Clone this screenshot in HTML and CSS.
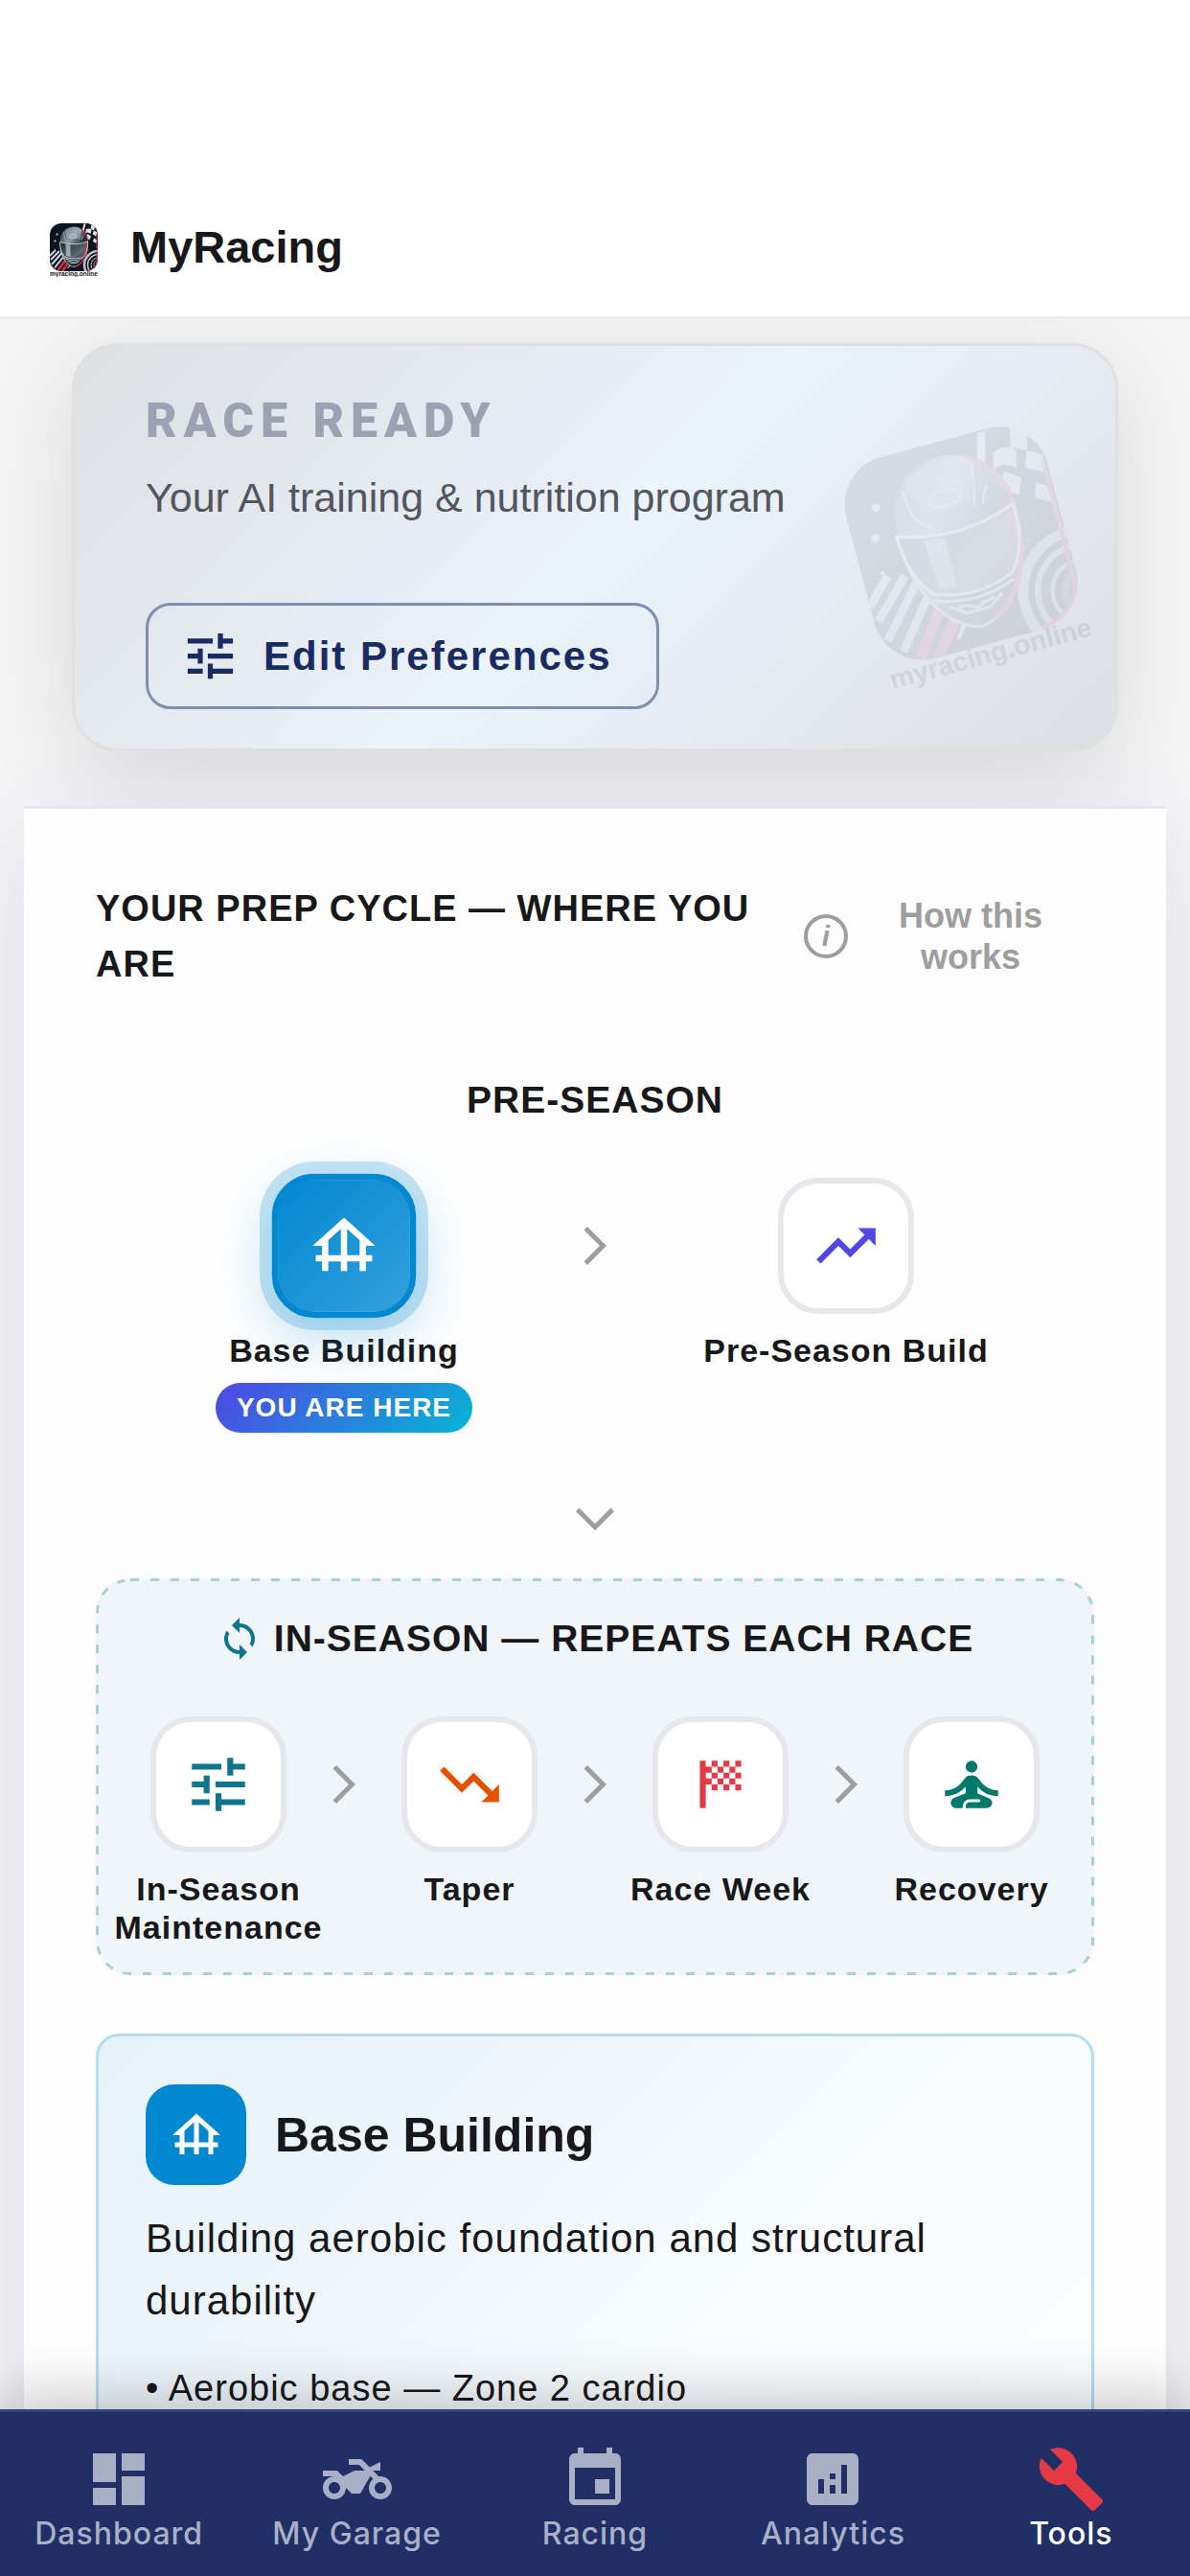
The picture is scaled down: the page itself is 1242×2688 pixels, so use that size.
FILE: index.html
```html
<!DOCTYPE html>
<html lang="en">
<head>
<meta charset="utf-8">
<meta name="viewport" content="width=device-width, initial-scale=1">
<title>MyRacing</title>
<link rel="stylesheet" href="styles.css">
</head>
<body>
<svg class="sprite" aria-hidden="true">
  <defs>
    <linearGradient id="helmet-shell" x1="0" y1="0" x2="1" y2="1">
      <stop offset="0" stop-color="#1d2932"/>
      <stop offset=".35" stop-color="#8d9ea6"/>
      <stop offset=".6" stop-color="#26313a"/>
      <stop offset="1" stop-color="#0e151c"/>
    </linearGradient>
    <linearGradient id="helmet-visor" x1="0" y1="0" x2="1" y2="1">
      <stop offset="0" stop-color="#1a242c"/>
      <stop offset=".7" stop-color="#5c6c74"/>
      <stop offset="1" stop-color="#11181f"/>
    </linearGradient>
    <clipPath id="logo-clip"><rect width="100" height="100" rx="24"/></clipPath>
    <g id="logo" clip-path="url(#logo-clip)">
      <rect width="100" height="100" fill="#0c1420"/>
      <path d="M0 68 12 56M2 76 20 58M4 86 25 62M10 93 30 68" stroke="#c9d2d6" stroke-width="4"/>
      <path d="M17 98 35 74M25 101 42 79" stroke="#e0263c" stroke-width="5"/>
      <path d="M37 94l6-8" stroke="#e6ebed" stroke-width="2"/>
      <g fill="#dfe6e9">
        <path d="M71 1h4l-4 16h-4z"/>
        <path d="M76 12q8-3 11 2l-2 8q-5-5-11-2zM87 2l8 4-3 9-7-3zM92 15l7 4-2 8-8-4zM79 22l7 5-3 8-8-6zM92 31l7 4-2 7-7-4z"/>
        <circle cx="15" cy="23" r="2"/><circle cx="11" cy="37" r="2"/><circle cx="10" cy="54" r="1"/>
      </g>
      <circle cx="81" cy="57" r="1" fill="#e0263c"/>
      <g fill="none" stroke="#b9c4c9">
        <circle cx="101" cy="87" r="29" stroke-width="5"/>
        <circle cx="101" cy="87" r="22" stroke-width="3"/>
        <circle cx="101" cy="87" r="15" stroke-width="2"/>
        <circle cx="101" cy="87" r="9" stroke-width="4" stroke="#4b5863"/>
      </g>
      <path d="M22 42C20 20 33 7 50 7s30 13 29 35c1 24-11 46-29 49C33 88 21 66 22 42z" fill="url(#helmet-shell)"/>
      <path d="M79 42c1 24-11 46-29 49C33 88 21 66 22 42" fill="none" stroke="#c3ced2" stroke-width="1.5"/>
      <path d="M60 10c13 5 20 17 19 32 1 20-8 40-22 47" fill="none" stroke="#d8243b" stroke-width="2.5"/>
      <path d="M31 16Q49 2 65 14l-6 18H36z" fill="#aab7bd" opacity=".55"/>
      <path d="M60 10l5 4-4 20M29 18l2 14 7 8M69 26l-4 8" fill="none" stroke="#dce3e6" stroke-width="1"/>
      <ellipse cx="48" cy="27" rx="8" ry="4" fill="none" stroke="#e3eaec"/>
      <path d="M21 39q29 10 58-1 1 21-9 32-20 8-39 0Q21 59 21 39z" fill="url(#helmet-visor)" stroke="#e8eef0" stroke-width="1.5"/>
      <path d="M33 44l10 1v25l-9-2z" fill="#dde5e8" opacity=".6"/>
      <path d="M76 40q1 19-8 28" fill="none" stroke="#e0263c" stroke-width="1.5"/>
      <path d="M30 73q20 8 40 0M37 78l7 5h12l7-5M41 79l6 1 3 2 3-2 6-1" fill="none" stroke="#d3dcdf" stroke-width="1.5"/>
      <path d="M98 22v56q0 18-20 21" fill="none" stroke="#e0263c" stroke-width="2"/>
    </g>
  </defs>
  <symbol id="tune" viewBox="0 0 24 24"><path d="M3 17v2h6v-2zM3 5v2h10V5zm10 16v-2h8v-2h-8v-2h-2v6zM7 9v2H3v2h4v2h2V9zm14 4v-2H11v2zm-6-4h2V7h4V5h-4V3h-2z"/></symbol>
  <symbol id="foundation" viewBox="0 0 24 24"><path d="M19 12h3L12 3 2 12h3v3H3v2h2v3h2v-3h4v3h2v-3h4v3h2v-3h2v-2h-2zM7 15v-4.81l4-3.6V15zm6 0V6.590l4 3.6V15z"/></symbol>
  <symbol id="trend-up" viewBox="0 0 24 24"><path d="m16 6 2.290 2.290-4.880 4.880-4-4L2 16.590 3.410 18l6-6 4 4 6.300-6.290L22 12V6z"/></symbol>
  <symbol id="trend-down" viewBox="0 0 24 24"><path d="m16 18 2.290-2.290-4.880-4.880-4 4L2 7.410 3.410 6l6 6 4-4 6.300 6.290L22 12v6z"/></symbol>
  <symbol id="flag" viewBox="0 0 24 24"><path d="M5 4h2v16H5zM9 4h2v2H9zM13 4h2v2h-2zM17 4h2v2h-2zM7 6h2v2H7zM11 6h2v2h-2zM15 6h2v2h-2zM9 8h2v2H9zM13 8h2v2h-2zM17 8h2v2h-2zM7 10h2v2H7zM11 10h2v2h-2zM15 10h2v2h-2zM9 12h2v2H9zM13 12h2v2h-2zM17 12h2v2h-2z"/></symbol>
  <symbol id="yoga" viewBox="0 0 24 24"><circle cx="12" cy="6" r="2"/><path d="M21 16v-2c-2.240 0-4.160-.96-5.600-2.680l-1.340-1.600C13.680 9.260 13.120 9 12.530 9h-1.050c-.6 0-1.150.26-1.530.72l-1.340 1.600C7.160 13.040 5.240 14 3 14v2c2.770 0 5.190-1.170 7-3.250V15l-3.880 1.550c-.67.27-1.120.93-1.120 1.660C5 19.200 5.800 20 6.790 20H9v-.5c0-1.380 1.120-2.500 2.500-2.500h3c.28 0 .5.22.5.5s-.22.5-.5.5h-3c-.83 0-1.500.67-1.500 1.500v.5h7.100c.85 0 1.620-.5 1.810-1.320.2-.88-.26-1.650-1-1.950L14 15v-2.250c1.810 2.080 4.230 3.250 7 3.250"/></symbol>
  <symbol id="sync" viewBox="0 0 24 24"><path d="M12 4V1L8 5l4 4V6c3.310 0 6 2.690 6 6 0 1.010-.25 1.970-.7 2.800l1.460 1.460C19.540 15.030 20 13.570 20 12c0-4.420-3.580-8-8-8m0 14c-3.310 0-6-2.690-6-6 0-1.010.25-1.970.7-2.800L5.240 7.740C4.460 8.970 4 10.430 4 12c0 4.420 3.580 8 8 8v3l4-4-4-4z"/></symbol>
  <symbol id="next" viewBox="0 0 24 24"><path d="M6.230 20.230 8 22l10-10L8 2 6.230 3.770 14.460 12z"/></symbol>
  <symbol id="down" viewBox="0 0 24 24"><path d="M3.770 6.230 2 8l10 10L22 8l-1.770-1.770L12 14.460z"/></symbol>
  <symbol id="dashboard" viewBox="0 0 24 24"><path d="M3 13h8V3H3zm0 8h8v-6H3zm10 0h8V11h-8zm0-18v6h8V3z"/></symbol>
  <symbol id="bike" viewBox="0 0 24 24"><path d="M20 11c-.18 0-.36.03-.53.05L17.410 9H20V6l-3.720 1.860L13.410 5H9v2h3.590l2 2H11l-4 2-2-2H0v2h4c-2.210 0-4 1.790-4 4s1.790 4 4 4 4-1.790 4-4l2 2h3l3.490-6.100 1.010 1.010c-.91.73-1.500 1.840-1.500 3.090 0 2.210 1.790 4 4 4s4-1.790 4-4-1.790-4-4-4M4 17c-1.100 0-2-.9-2-2s.9-2 2-2 2 .9 2 2-.9 2-2 2m16 0c-1.100 0-2-.9-2-2s.9-2 2-2 2 .9 2 2-.9 2-2 2"/></symbol>
  <symbol id="event" viewBox="0 0 24 24"><path d="M17 12h-5v5h5zM16 1v2H8V1H6v2H5c-1.110 0-1.990.9-1.990 2L3 19c0 1.100.89 2 2 2h14c1.100 0 2-.9 2-2V5c0-1.100-.9-2-2-2h-1V1zm3 18H5V8h14z"/></symbol>
  <symbol id="analytics" viewBox="0 0 24 24"><path d="M19 3H5c-1.100 0-2 .9-2 2v14c0 1.100.9 2 2 2h14c1.100 0 2-.9 2-2V5c0-1.100-.9-2-2-2M9 17H7v-5h2zm4 0h-2v-3h2zm0-5h-2v-2h2zm4 5h-2V7h2z"/></symbol>
  <symbol id="wrench" viewBox="0 0 24 24"><path d="m22.700 19-9.100-9.100c.9-2.300.4-5-1.500-6.900-2-2-5-2.400-7.400-1.300L9 6 6 9 1.600 4.700C.4 7.100.9 10.100 2.900 12.100c1.900 1.900 4.600 2.400 6.900 1.500l9.100 9.100c.4.4 1 .4 1.400 0l2.300-2.300c.5-.4.5-1.100.1-1.400"/></symbol>
</svg>

<header class="topbar">
  <svg class="topbar-logo" viewBox="0 -12 100 124" aria-hidden="true">
    <use href="#logo"/>
    <text class="logo-caption" x="50" y="109" text-anchor="middle">myracing.online</text>
  </svg>
  <h1 class="topbar-title">MyRacing</h1>
</header>

<main class="content">
  <section class="hero">
    <h2 class="hero-title">RACE READY</h2>
    <p class="hero-text">Your AI training &amp; nutrition program</p>
    <button class="edit-button" type="button">
      <svg class="edit-icon" aria-hidden="true"><use href="#tune"/></svg>
      Edit Preferences
    </button>
    <svg class="hero-mark" viewBox="0 -12 100 124" aria-hidden="true">
      <use href="#logo"/>
      <text class="logo-caption" x="50" y="109" text-anchor="middle">myracing.online</text>
    </svg>
  </section>

  <section class="panel">
    <div class="panel-head">
      <h2 class="panel-title">YOUR PREP CYCLE — WHERE YOU ARE</h2>
      <button class="help" type="button">
        <span class="help-icon" aria-hidden="true">i</span>
        <span class="help-label">How this works</span>
      </button>
    </div>

    <div class="stage">
      <h3 class="stage-title">PRE-SEASON</h3>
      <div class="steps">
        <div class="step">
          <div class="tile tile-active"><svg class="tile-icon"><use href="#foundation"/></svg></div>
          <span class="step-label">Base Building</span>
          <span class="badge">YOU ARE HERE</span>
        </div>
        <div class="arrow"><svg class="arrow-icon"><use href="#next"/></svg></div>
        <div class="step">
          <div class="tile"><svg class="tile-icon indigo"><use href="#trend-up"/></svg></div>
          <span class="step-label">Pre-Season Build</span>
        </div>
      </div>
    </div>

    <svg class="arrow-icon arrow-down"><use href="#down"/></svg>

    <div class="stage stage-loop">
      <svg class="loop-outline" aria-hidden="true"><rect width="100%" height="100%" rx="36"/></svg>
      <h3 class="stage-title"><svg class="sync-icon"><use href="#sync"/></svg>IN-SEASON — REPEATS EACH RACE</h3>
      <div class="steps">
        <div class="step">
          <div class="tile"><svg class="tile-icon teal"><use href="#tune"/></svg></div>
          <span class="step-label">In-Season Maintenance</span>
        </div>
        <div class="arrow"><svg class="arrow-icon"><use href="#next"/></svg></div>
        <div class="step">
          <div class="tile"><svg class="tile-icon orange"><use href="#trend-down"/></svg></div>
          <span class="step-label">Taper</span>
        </div>
        <div class="arrow"><svg class="arrow-icon"><use href="#next"/></svg></div>
        <div class="step">
          <div class="tile"><svg class="tile-icon red"><use href="#flag"/></svg></div>
          <span class="step-label">Race Week</span>
        </div>
        <div class="arrow"><svg class="arrow-icon"><use href="#next"/></svg></div>
        <div class="step">
          <div class="tile"><svg class="tile-icon green"><use href="#yoga"/></svg></div>
          <span class="step-label">Recovery</span>
        </div>
      </div>
    </div>

    <article class="phase">
      <div class="phase-head">
        <div class="phase-tile"><svg class="phase-icon"><use href="#foundation"/></svg></div>
        <h3 class="phase-title">Base Building</h3>
      </div>
      <p class="phase-text">Building aerobic foundation and structural durability</p>
      <p class="phase-point">• Aerobic base — Zone 2 cardio</p>
    </article>
  </section>
</main>

<nav class="tabs" aria-label="Main">
  <a class="tab" href="#dashboard"><svg class="tab-icon"><use href="#dashboard"/></svg>Dashboard</a>
  <a class="tab" href="#bike"><svg class="tab-icon"><use href="#bike"/></svg>My Garage</a>
  <a class="tab" href="#event"><svg class="tab-icon"><use href="#event"/></svg>Racing</a>
  <a class="tab" href="#analytics"><svg class="tab-icon"><use href="#analytics"/></svg>Analytics</a>
  <a class="tab tab-current" href="#wrench" aria-current="page"><svg class="tab-icon"><use href="#wrench"/></svg>Tools</a>
</nav>
</body>
</html>
```
FILE: styles.css
```css
* {
  box-sizing: border-box;
}

body {
  margin: 0;
  height: 100vh;
  display: flex;
  flex-direction: column;
  background: #f5f5f6;
  color: #18181a;
  font-family: "Liberation Sans", Arial, Helvetica, sans-serif;
}

h1, h2, h3, p {
  margin: 0;
}

svg {
  display: block;
  flex: none;
  fill: currentColor;
}

button {
  font-family: inherit;
  cursor: pointer;
}

.sprite {
  position: absolute;
  width: 0;
  height: 0;
}

.logo-caption {
  font: bold 13px "Liberation Sans", Arial, sans-serif;
  fill: #15171a;
}

/* Top bar */
.topbar {
  display: flex;
  align-items: center;
  gap: 34px;
  flex: none;
  height: 333px;
  padding: 186px 52px 0;
  background: #fff;
  border-bottom: 3px solid #ececed;
}

.topbar-logo {
  width: 50px;
  height: 62px;
}

.topbar-title {
  font-size: 47px;
  line-height: 56px;
}

/* Scrolling area */
.content {
  flex: 1;
  min-height: 0;
  overflow-y: auto;
  scrollbar-width: none;
  padding-top: 25px;
}

.hero {
  position: relative;
  margin: 0 75px 57px;
  padding: 48px 74px 41px;
  border: 3px solid #e0e0e0;
  border-radius: 48px;
  background: linear-gradient(135deg, #dde1e4 0%, #e1e5e9 16%, #e6ebf2 34%, #e9f0f8 46%, #ecf4fc 50%, #e9f1f9 54%, #e6ebf2 70%, #e0e4e9 86%, #dcdfe3 100%);
  box-shadow: 0 24px 96px rgba(0, 0, 0, 0.12);
}

.hero-title {
  margin-bottom: 18px;
  color: #9ca2b1;
  font-family: Roboto, "Liberation Sans", sans-serif;
  font-size: 50px;
  font-weight: 900;
  line-height: 60px;
  letter-spacing: 7px;
}

.hero-text {
  margin-bottom: 78px;
  color: #55555f;
  font-size: 43px;
  line-height: 64px;
}

.hero-mark {
  position: absolute;
  top: 71px;
  right: 52px;
  width: 218px;
  height: 270px;
  opacity: 0.08;
  transform: rotate(-15deg);
}

.edit-button {
  display: flex;
  align-items: center;
  gap: 24px;
  height: 111px;
  padding: 0 46px 0 33px;
  border: 3px solid #7f8eb2;
  border-radius: 26px;
  background: none;
  color: #1a2a63;
  font-size: 42px;
  font-weight: bold;
  letter-spacing: 2px;
}

.edit-icon {
  width: 63px;
  height: 63px;
}

/* Prep cycle */
.panel {
  position: relative;
  margin: 0 25px;
  padding: 75px 75px 90px;
  border-top: 3px solid #e6e6ec;
  background: #fdfdfd;
  box-shadow: 0 24px 96px rgba(60, 60, 120, 0.12);
}

.panel-head {
  display: flex;
  align-items: center;
}

.panel-title {
  flex: 1;
  font-size: 38px;
  line-height: 58px;
  letter-spacing: 1px;
}

.help {
  display: flex;
  align-items: center;
  gap: 28px;
  padding: 0 29px 0 0;
  border: 0;
  background: none;
  color: #9e9e9e;
  font-size: 36px;
  font-weight: bold;
  line-height: 43px;
}

.help-icon {
  width: 46px;
  height: 46px;
  border: 4px solid #9e9e9e;
  border-radius: 50%;
  font-size: 30px;
  font-style: italic;
  line-height: 38px;
}

.help-label {
  width: 200px;
}

.stage {
  margin-top: 84px;
  padding: 0 21px;
}

.stage-title {
  display: flex;
  align-items: center;
  justify-content: center;
  gap: 12px;
  margin-bottom: 52px;
  font-size: 39px;
  line-height: 58px;
  letter-spacing: 1px;
}

.steps {
  display: flex;
  align-items: flex-start;
}

.step {
  flex: 1;
  min-width: 0;
  display: flex;
  flex-direction: column;
  align-items: center;
}

.step-label {
  margin-top: 18px;
  font-size: 34px;
  font-weight: bold;
  line-height: 40px;
  letter-spacing: 1px;
  text-align: center;
}

.tile {
  display: grid;
  place-items: center;
  width: 142px;
  height: 142px;
  border: 6px solid #e7e7ec;
  border-radius: 42px;
  background: #fff;
}

.tile-active {
  border-color: #0288d1;
  background: linear-gradient(135deg, #0288d1, #35a0dc);
  box-shadow: 0 0 0 12px rgba(2, 136, 209, 0.21), 0 18px 54px rgba(2, 136, 209, 0.27);
  color: #fff;
  transform: scale(1.06);
}

.tile-icon {
  width: 74px;
  height: 74px;
}

.indigo { color: #4f46e5; }
.teal { color: #0e7490; }
.orange { color: #e65100; }
.red { color: #e63946; }
.green { color: #00796b; }

.arrow {
  display: grid;
  place-items: center;
  width: 48px;
  height: 142px;
}

.arrow-icon {
  width: 48px;
  height: 48px;
  color: #9e9e9e;
}

.arrow-down {
  margin: 66px auto 0;
}

.badge {
  margin-top: 14px;
  padding: 0 22px;
  border-radius: 26px;
  background: linear-gradient(135deg, #4f46e5, #06b6d4);
  color: #fff;
  font-size: 28px;
  font-weight: bold;
  line-height: 52px;
  letter-spacing: 1px;
  white-space: nowrap;
}

.stage-loop {
  position: relative;
  margin-top: 38px;
  padding: 34px 21px 30px;
  border-radius: 36px;
  background: #eff5f8;
}

/* Dashed outline; the outer half of the stroke is clipped away */
.loop-outline {
  position: absolute;
  inset: 0;
  width: 100%;
  height: 100%;
  overflow: hidden;
  border-radius: 36px;
  fill: none;
  stroke: #a9cfda;
  stroke-width: 6px;
  stroke-dasharray: 9 12;
}

.sync-icon {
  width: 48px;
  height: 48px;
  color: #0e7490;
}

/* Current phase card */
.phase {
  margin-top: 61px;
  padding: 50px 49px;
  border: 3px solid #b5dcf0;
  border-radius: 24px;
  background: linear-gradient(135deg, #e6f2f9, #edf5fb 30%, #f8fcfe 65%, #fbfdfe);
}

.phase-head {
  display: flex;
  align-items: center;
  gap: 30px;
}

.phase-tile {
  display: grid;
  place-items: center;
  width: 105px;
  height: 105px;
  border-radius: 30px;
  background: #0288d1;
  color: #fff;
}

.phase-icon {
  width: 60px;
  height: 60px;
}

.phase-title {
  font-size: 50px;
  line-height: 60px;
}

.phase-text {
  margin-top: 23px;
  font-size: 42px;
  line-height: 65px;
  letter-spacing: 1px;
}

.phase-point {
  margin-top: 30px;
  font-size: 38px;
  line-height: 58px;
  letter-spacing: 1px;
}

/* Bottom navigation */
.tabs {
  position: relative;
  display: flex;
  flex: none;
  height: 174px;
  padding-top: 34px;
  border-top: 3px solid #34457b;
  background: #203066;
  box-shadow: 0 -12px 60px rgba(0, 0, 0, 0.22);
}

.tab {
  flex: 1;
  display: flex;
  flex-direction: column;
  align-items: center;
  gap: 1px;
  color: #a9afc5;
  font-family: Inter, "Liberation Sans", sans-serif;
  font-size: 32px;
  font-weight: 500;
  line-height: 40px;
  letter-spacing: 1px;
  text-decoration: none;
}

.tab-icon {
  width: 72px;
  height: 72px;
}

.tab-current {
  color: #fff;
}

.tab-current .tab-icon {
  color: #e63946;
}
```
